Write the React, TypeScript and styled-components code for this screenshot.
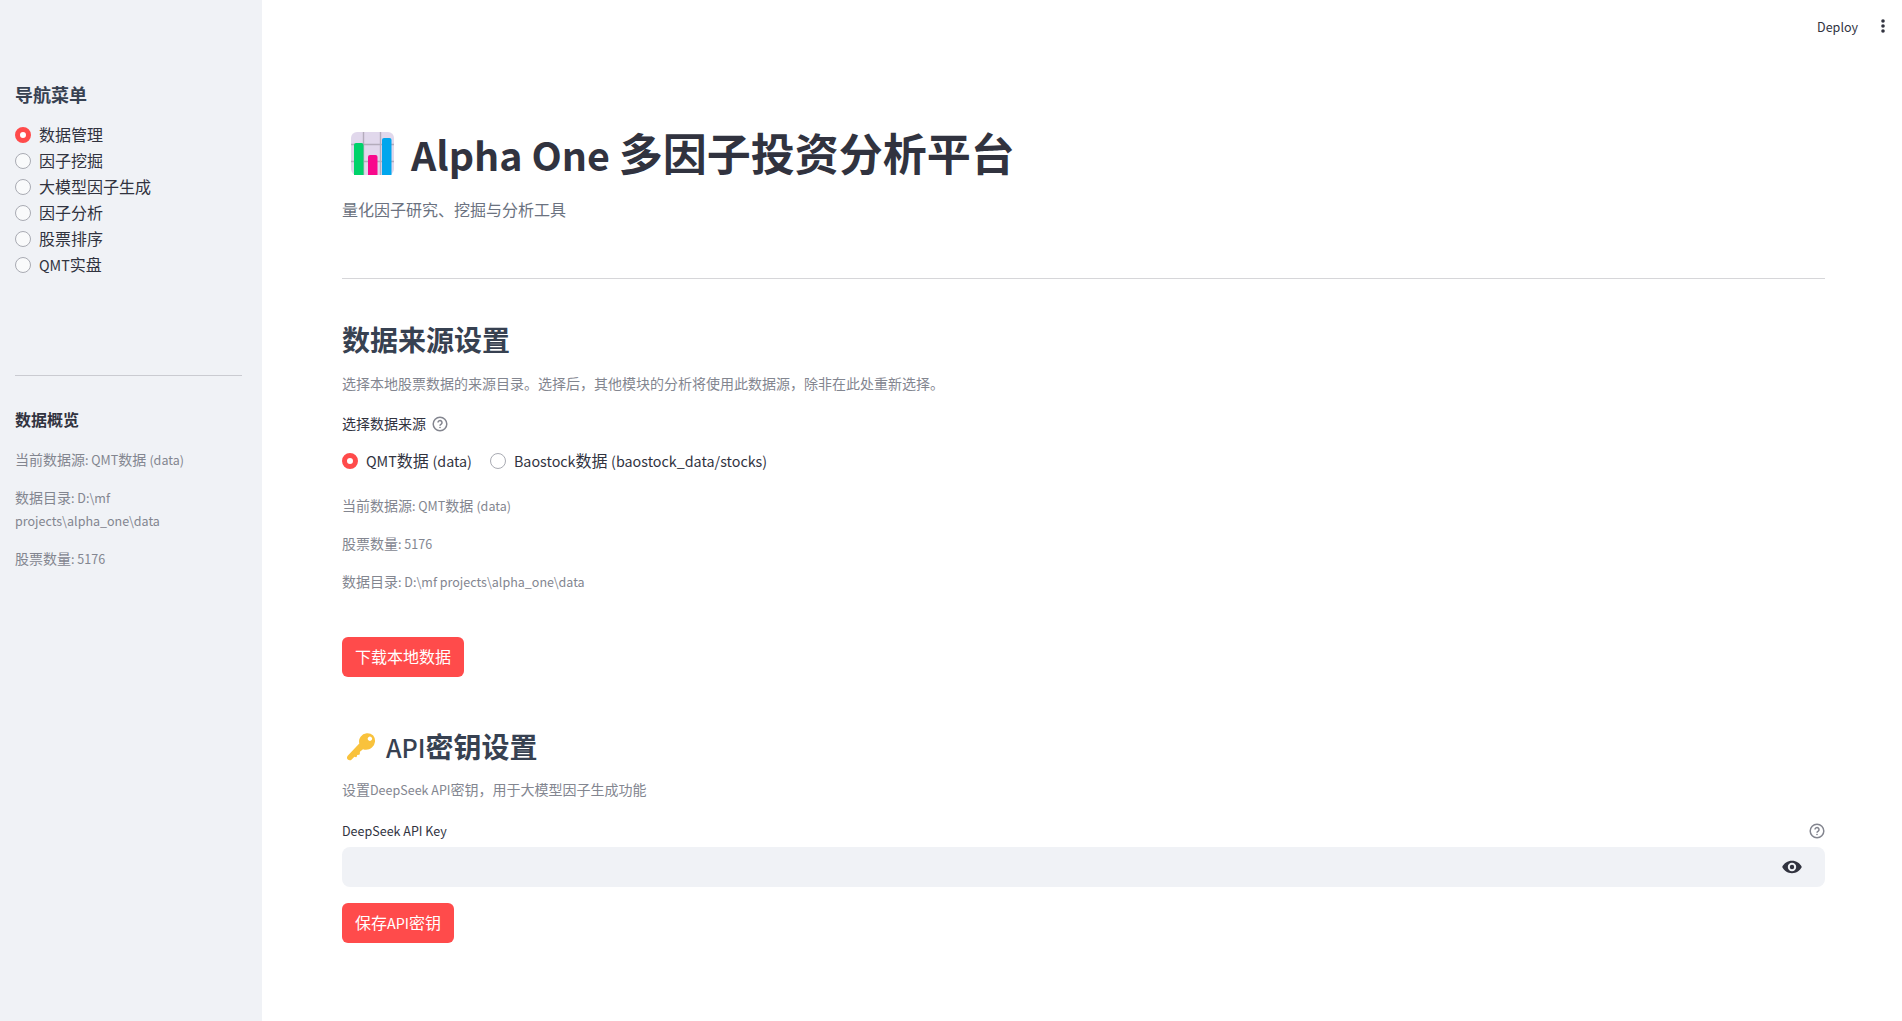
import React, { useState } from "react";
import styled, { createGlobalStyle } from "styled-components";

const GlobalStyle = createGlobalStyle`
  *, *::before, *::after { box-sizing: border-box; }
  body {
    margin: 0;
    background: #ffffff;
    color: #31333f;
    font-family: "Noto Sans CJK SC", "Noto Sans", sans-serif;
    font-size: 16px;
  }
  h1, h2, h3, p, fieldset, legend { margin: 0; padding: 0; border: 0; }
`;

const Shell = styled.div`
  display: flex;
  min-height: 100vh;
`;

const Sidebar = styled.aside`
  flex: 0 0 262px;
  padding: 80px 20px 0 15px;
  background: #f0f2f6;
`;

const Main = styled.div`
  flex: 1;
  min-width: 0;
`;

const Toolbar = styled.header`
  display: flex;
  justify-content: flex-end;
  align-items: center;
  gap: 16px;
  height: 52px;
  padding-right: 10px;
`;

const ToolButton = styled.button`
  display: flex;
  align-items: center;
  padding: 0;
  border: 0;
  background: none;
  color: #31333f;
  font: inherit;
  font-size: 14px;
  line-height: 24px;
`;

const Content = styled.main`
  display: flex;
  flex-direction: column;
  padding: 73px 77px 78px 80px;
`;

/* Latin runs get a smaller x-height than the Chinese face's own letters. */
const Latin = styled.span<{ $weight?: number }>`
  font-size-adjust: 0.486;
  font-weight: ${(p) => p.$weight ?? "inherit"};
  line-height: 0;
`;

const Title = styled.h1`
  display: flex;
  align-items: center;
  gap: 16px;
  padding-left: 8px;
  font-size: 44px;
  font-weight: 700;
  line-height: 54px;
`;

const Subtitle = styled.p`
  margin-top: 17px;
  color: #6b7280;
  line-height: 26px;
`;

const Rule = styled.hr<{ $top: number; $bottom: number }>`
  width: 100%;
  height: 1px;
  flex: none;
  margin: ${(p) => p.$top}px 0 ${(p) => p.$bottom}px;
  border: 0;
  background: rgba(49, 51, 63, 0.2);
`;

const SectionTitle = styled.h2`
  display: flex;
  align-items: center;
  gap: 8px;
  color: #374151;
  font-size: 28px;
  font-weight: 700;
  line-height: 40px;
`;

const SideTitle = styled.h3`
  color: #374151;
  font-size: 18px;
  font-weight: 700;
  line-height: 28px;
`;

const SideSubtitle = styled.h3`
  color: #31333f;
  font-size: 16px;
  font-weight: 700;
  line-height: 26px;
`;

const Caption = styled.p<{ $top: number }>`
  margin-top: ${(p) => p.$top}px;
  color: #838690;
  font-size: 14px;
  line-height: 23px;
`;

const NavGroup = styled.fieldset`
  display: flex;
  flex-direction: column;
  margin-top: 14px;
`;

const SourceGroup = styled.fieldset`
  margin-top: 16px;
`;

const SourceOptions = styled.div`
  display: flex;
  gap: 18px;
  margin-top: 13px;
`;

const Option = styled.label`
  display: flex;
  align-items: center;
  gap: 8px;
  height: 26px;
  line-height: 24px;
  cursor: pointer;
  > span { padding-bottom: 2px; }
`;

const RadioInput = styled.input`
  appearance: none;
  flex: none;
  width: 16px;
  height: 16px;
  margin: 0;
  border: 1px solid #a9abb3;
  border-radius: 50%;
  background: rgba(255, 255, 255, 0.6);
  &:checked {
    border: 5px solid #ff4b4b;
    background: #ffffff;
  }
`;

const Legend = styled.legend`
  display: flex;
  align-items: center;
  gap: 6px;
  font-size: 14px;
  line-height: 24px;
`;

const FieldHead = styled.div`
  display: flex;
  justify-content: space-between;
  align-items: center;
  margin-top: 17px;
  font-size: 14px;
  line-height: 24px;
`;

const InputBox = styled.div`
  display: flex;
  align-items: center;
  height: 40px;
  margin-top: 5px;
  padding-right: 23px;
  border-radius: 8px;
  background: #f0f2f6;
`;

const TextInput = styled.input`
  flex: 1;
  height: 40px;
  padding: 0 12px;
  border: 0;
  outline: 0;
  background: transparent;
  color: #31333f;
  font: inherit;
`;

const PrimaryButton = styled.button<{ $top: number }>`
  align-self: flex-start;
  height: 40px;
  margin-top: ${(p) => p.$top}px;
  padding: 0 13px 3px;
  border: 0;
  border-radius: 6px;
  background: #ff4b4b;
  color: #ffffff;
  font: inherit;
  line-height: 26px;
`;

const KeySection = styled.section`
  display: flex;
  flex-direction: column;
  margin-top: 49px;
`;

const Icon = styled.svg`
  display: block;
  flex: none;
`;

/* Wraps each Latin word of a mixed text in its own span. */
function Mixed({ text, weight }: { text: string; weight?: number }) {
  return (
    <span>
      {text.split(/([\x21-\x7e]+\s?)/).map((part, i) =>
        i % 2 ? <Latin key={i} $weight={weight}>{part}</Latin> : part
      )}
    </span>
  );
}

function ChartIcon() {
  return (
    <Icon width="45" height="48" viewBox="0 -3 45 48" aria-hidden="true">
      <rect x="1" y="1" width="43" height="43" rx="6" fill="#e1d8ec" />
      <path d="M13.5 1v43M30.5 1v43M1 13.5h43M1 30.5h43" stroke="#b4acbc" strokeWidth="1.4" />
      <path d="M4 44V14q0-2 2-2h5.500q2 0 2 2v30z" fill="#00d26a" />
      <path d="M18 44V26q0-2 2-2h5.500q2 0 2 2v18z" fill="#f8098c" />
      <path d="M32 44V9q0-2 2-2h5.500q2 0 2 2v35z" fill="#00a6ed" />
    </Icon>
  );
}

function KeyIcon() {
  return (
    <Icon width="36" height="32" viewBox="0 -2 36 32" aria-hidden="true">
      <path
        fill="#f9c23c"
        d="M31.200 3.600a8.200 8.200 0 0 0-12.600 1.100c-1.500 2.100-1.900 4.600-1.300 6.900L5.700 23.700c-1 1.100-1 2.900.1 3.900s2.900 1 3.900-.1l2.700-2.800 1.500.5c.5.100.8-.1.900-.6l.4-1.700 1.800-.2c.5 0 .8-.3.8-.8l.1-2.100 3.100-2.600c2.900 1.100 6.300.6 8.900-1.700a8.500 8.500 0 0 0 1.300-11.900zM29.400 8.300a2.100 2.100 0 1 1-3-3 2.100 2.100 0 0 1 3 3z"
      />
    </Icon>
  );
}

function HelpIcon() {
  return (
    <Icon width="16" height="18" viewBox="0 -2 16 18" fill="none" stroke="#83858f" strokeWidth="1.500" role="img" aria-label="帮助">
      <circle cx="8" cy="8" r="6.800" />
      <path d="M6 6.500a2 2 0 1 1 3.200 1.600C8.400 8.600 8 8.900 8 9.700" />
      <circle cx="8" cy="11.500" r=".5" fill="#83858f" strokeWidth=".6" />
    </Icon>
  );
}

function EyeIcon() {
  return (
    <Icon width="20" height="14" viewBox="0 0 20 14" aria-hidden="true">
      <path
        fill="#31333f"
        fillRule="evenodd"
        d="M10 .8C5.600.8 2 3.300.2 7 2 10.700 5.600 13.200 10 13.200s8-2.500 9.800-6.200C18 3.300 14.400.8 10 .8zm0 10.400a4.200 4.200 0 1 1 0-8.400 4.200 4.200 0 0 1 0 8.400zm0-2a2.200 2.200 0 1 0 0-4.400 2.200 2.200 0 0 0 0 4.400z"
      />
    </Icon>
  );
}

function DotsIcon() {
  return (
    <Icon width="18" height="18" viewBox="0 0 18 18" fill="#31333f" aria-hidden="true">
      <circle cx="9" cy="4" r="1.800" />
      <circle cx="9" cy="9" r="1.800" />
      <circle cx="9" cy="14" r="1.800" />
    </Icon>
  );
}

const pages = ["数据管理", "因子挖掘", "大模型因子生成", "因子分析", "股票排序", "QMT实盘"];
const sources = ["QMT数据 (data)", "Baostock数据 (baostock_data/stocks)"];

export default function App() {
  const [page, setPage] = useState(pages[0]);
  const [source, setSource] = useState(sources[0]);
  const [visible, setVisible] = useState(false);

  return (
    <>
      <GlobalStyle />
      <Shell>
        <Sidebar>
          <SideTitle>导航菜单</SideTitle>
          <NavGroup aria-label="导航菜单">
            {pages.map((name) => (
              <Option key={name}>
                <RadioInput type="radio" name="page" checked={page === name} onChange={() => setPage(name)} />
                <Mixed text={name} />
              </Option>
            ))}
          </NavGroup>
          <Rule $top={97} $bottom={30} />
          <SideSubtitle>数据概览</SideSubtitle>
          <Caption $top={16}><Mixed text="当前数据源: QMT数据 (data)" /></Caption>
          <Caption $top={15}><Mixed text="数据目录: D:\mf projects\alpha_one\data" /></Caption>
          <Caption $top={15}><Mixed text="股票数量: 5176" /></Caption>
        </Sidebar>
        <Main>
          <Toolbar>
            <ToolButton type="button"><Mixed text="Deploy" /></ToolButton>
            <ToolButton type="button" aria-label="菜单"><DotsIcon /></ToolButton>
          </Toolbar>
          <Content>
            <Title>
              <ChartIcon />
              <Mixed text="Alpha One 多因子投资分析平台" />
            </Title>
            <Subtitle>量化因子研究、挖掘与分析工具</Subtitle>
            <Rule $top={56} $bottom={40} />
            <SectionTitle>数据来源设置</SectionTitle>
            <Caption $top={13}>选择本地股票数据的来源目录。选择后，其他模块的分析将使用此数据源，除非在此处重新选择。</Caption>
            <SourceGroup>
              <Legend>选择数据来源<HelpIcon /></Legend>
              <SourceOptions>
                {sources.map((name) => (
                  <Option key={name}>
                    <RadioInput type="radio" name="source" checked={source === name} onChange={() => setSource(name)} />
                    <Mixed text={name} />
                  </Option>
                ))}
              </SourceOptions>
            </SourceGroup>
            <Caption $top={20}><Mixed text="当前数据源: QMT数据 (data)" /></Caption>
            <Caption $top={15}><Mixed text="股票数量: 5176" /></Caption>
            <Caption $top={15}><Mixed text="数据目录: D:\mf projects\alpha_one\data" /></Caption>
            <PrimaryButton type="button" $top={44}>下载本地数据</PrimaryButton>
            <KeySection>
              <SectionTitle>
                <KeyIcon />
                <Mixed text="API密钥设置" weight={500} />
              </SectionTitle>
              <Caption $top={12}><Mixed text="设置DeepSeek API密钥，用于大模型因子生成功能" /></Caption>
              <FieldHead>
                <label htmlFor="api-key"><Mixed text="DeepSeek API Key" /></label>
                <HelpIcon />
              </FieldHead>
              <InputBox>
                <TextInput id="api-key" type={visible ? "text" : "password"} />
                <ToolButton type="button" aria-label="显示密钥" onClick={() => setVisible(!visible)}><EyeIcon /></ToolButton>
              </InputBox>
              <PrimaryButton type="button" $top={16}><Mixed text="保存API密钥" /></PrimaryButton>
            </KeySection>
          </Content>
        </Main>
      </Shell>
    </>
  );
}
